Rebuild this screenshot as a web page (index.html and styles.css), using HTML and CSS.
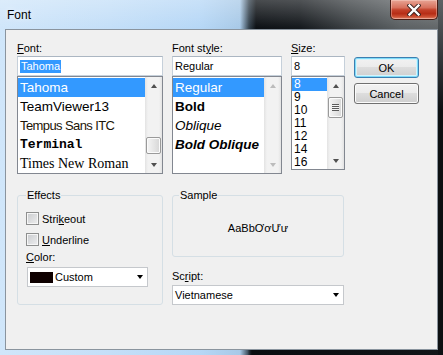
FILE: index.html
```html
<!DOCTYPE html>
<html lang="en">
<head>
    <meta charset="UTF-8">
    <meta name="viewport" content="width=device-width, initial-scale=1.0">
    <title>Font</title>
    <link rel="stylesheet" href="styles.css">
</head>
<body>
    <div class="window">
        <div class="titlebar">
            <span class="title">Font</span>
            <button class="close" aria-label="Close">
                <svg width="14" height="12" viewBox="0 0 14 12">
                    <path d="M2.5 1.5 L11.5 10.5 M11.5 1.5 L2.5 10.5" stroke="#3b2320" stroke-width="4.2" stroke-linecap="square" fill="none"/>
                    <path d="M2.5 1.5 L11.5 10.5 M11.5 1.5 L2.5 10.5" stroke="#ffffff" stroke-width="2.4" stroke-linecap="square" fill="none"/>
                </svg>
            </button>
        </div>

        <div class="dialog">
            <div class="top-row">
                <!-- Font family -->
                <div class="col col-font">
                    <label class="lbl"><u>F</u>ont:</label>
                    <div class="textbox"><span class="sel">Tahoma</span></div>
                    <div class="listbox list-font">
                        <ul class="items">
                            <li class="item active">Tahoma</li>
                            <li class="item">TeamViewer13</li>
                            <li class="item f-tempus">Tempus Sans ITC</li>
                            <li class="item f-terminal">Terminal</li>
                            <li class="item f-times">Times New Roman</li>
                        </ul>
                        <div class="scrollbar">
                            <div class="sb-btn up"></div>
                            <div class="sb-track"><div class="thumb thumb-font"></div></div>
                            <div class="sb-btn down"></div>
                        </div>
                    </div>
                </div>

                <!-- Font style -->
                <div class="col col-style">
                    <label class="lbl">Font st<u>y</u>le:</label>
                    <div class="textbox">Regular</div>
                    <div class="listbox list-style">
                        <ul class="items">
                            <li class="item active">Regular</li>
                            <li class="item s-bold">Bold</li>
                            <li class="item s-oblique">Oblique</li>
                            <li class="item s-bold s-oblique">Bold Oblique</li>
                        </ul>
                        <div class="scrollbar disabled">
                            <div class="sb-btn up"></div>
                            <div class="sb-track"></div>
                            <div class="sb-btn down"></div>
                        </div>
                    </div>
                </div>

                <!-- Size -->
                <div class="col col-size">
                    <label class="lbl"><u>S</u>ize:</label>
                    <div class="textbox">8</div>
                    <div class="listbox list-size">
                        <ul class="items">
                            <li class="item active">8</li>
                            <li class="item">9</li>
                            <li class="item">10</li>
                            <li class="item">11</li>
                            <li class="item">12</li>
                            <li class="item">14</li>
                            <li class="item">16</li>
                        </ul>
                        <div class="scrollbar">
                            <div class="sb-btn up"></div>
                            <div class="sb-track"><div class="thumb thumb-size"></div></div>
                            <div class="sb-btn down"></div>
                        </div>
                    </div>
                </div>

                <div class="buttons">
                    <button class="btn btn-default">OK</button>
                    <button class="btn">Cancel</button>
                </div>
            </div>

            <div class="bottom-row">
                <fieldset class="group group-effects">
                    <legend>Effects</legend>
                    <div class="check-row first">
                        <span class="checkbox"></span>
                        <span>Stri<u>k</u>eout</span>
                    </div>
                    <div class="check-row">
                        <span class="checkbox"></span>
                        <span><u>U</u>nderline</span>
                    </div>
                    <label class="lbl lbl-color"><u>C</u>olor:</label>
                    <div class="combo combo-color">
                        <span class="swatch"></span>
                        <span class="combo-text">Custom</span>
                        <span class="combo-arrow"></span>
                    </div>
                </fieldset>

                <div class="col-right">
                    <fieldset class="group group-sample">
                        <legend>Sample</legend>
                        <div class="sample-text">AaBbƠơƯư</div>
                    </fieldset>
                    <label class="lbl lbl-script">Sc<u>r</u>ipt:</label>
                    <div class="combo combo-script">
                        <span class="combo-text">Vietnamese</span>
                        <span class="combo-arrow"></span>
                    </div>
                </div>
            </div>
        </div>
    </div>
</body>
</html>
```

FILE: styles.css
```css
body {
    margin: 0;
    font-family: "Liberation Sans", Arial, sans-serif;
    font-size: 11px;
    color: #000;
    background: #000;
}

u {
    text-decoration: underline;
    text-underline-offset: 1px;
}

/* Aero glass frame */
.window {
    width: 443px;
    height: 355px;
    display: flex;
    flex-direction: column;
    background:
        linear-gradient(to bottom, #5d6265 0, #2a2e31 70px, #0d1012 110px) right top / 5px 100% no-repeat,
        linear-gradient(to right, transparent 248px, #0a0d10 252px, #121518 100%) left bottom / 100% 5px no-repeat,
        linear-gradient(to bottom, rgba(255, 255, 255, 0.25), rgba(255, 255, 255, 0) 28px),
        linear-gradient(to right, #d0e6fa 0, #c4dff8 110px, #b6d7f6 200px, #a8c9e7 240px, #33414d 249px, #0c1014 256px, #15191d 300px, #3c4144 350px, #5b6063 400px, #64686a 443px);
}

.titlebar {
    height: 29px;
    display: flex;
    justify-content: space-between;
    align-items: flex-start;
}

.title {
    font-size: 12px;
    line-height: 30px;
    padding-left: 7px;
    text-shadow: 0 0 6px rgba(255, 255, 255, 0.9);
}

.close {
    width: 48px;
    height: 20px;
    margin-right: 5px;
    padding: 0;
    display: flex;
    align-items: center;
    justify-content: center;
    border: 1px solid #4a1d16;
    border-top: none;
    border-radius: 0 0 5px 5px;
    background: linear-gradient(#e8a595 0, #d7715d 40%, #c3412a 52%, #b72d16 72%, #cf5538 90%, #e49480 100%);
    box-shadow: inset 0 0 0 1px rgba(255, 230, 220, 0.35);
}

/* Dialog client area */
.dialog {
    flex: 1;
    margin: 0 5px 5px;
    background: #f0f0f0;
    border: 1px solid #8a949e;
    padding: 12px 0 0 11px;
}

.top-row {
    display: flex;
    gap: 9px;
    align-items: flex-start;
}

.col-font { width: 146px; }
.col-style { width: 110px; }
.col-size { width: 54px; }

.lbl {
    display: block;
    line-height: 13px;
    margin-bottom: 1px;
}

.textbox {
    height: 20px;
    box-sizing: border-box;
    border: 1px solid #c6d0da;
    border-top-color: #abb6c2;
    background: #fff;
    padding: 0 2px;
    line-height: 18px;
    white-space: nowrap;
}

.sel {
    display: inline-block;
    line-height: 13px;
    background: #3399ff;
    color: #fff;
    padding: 0 1px;
    vertical-align: middle;
    margin-top: -2px;
}

/* List boxes */
.listbox {
    display: flex;
    box-sizing: border-box;
    border: 1px solid #828790;
    background: #fff;
}

.list-font, .list-style { height: 98px; }
.list-size { height: 94px; }

.items {
    flex: 1;
    list-style: none;
    margin: 0;
    padding: 1px 0 0;
    overflow: hidden;
}

.item {
    height: 19px;
    line-height: 19px;
    padding-left: 2px;
    font-size: 13.5px;
    white-space: nowrap;
}

.item.active {
    background: #3399ff;
    color: #fff;
}

.f-tempus {
    font-size: 13px;
    letter-spacing: -0.6px;
    color: #1c1408;
}

.f-terminal {
    font-family: "Liberation Mono", "DejaVu Sans Mono", monospace;
    font-weight: bold;
    font-size: 13px;
}

.f-times {
    font-family: "Liberation Serif", "Times New Roman", serif;
    font-size: 14px;
}

.s-bold { font-weight: bold; }
.s-oblique { font-style: italic; }

.list-size .item {
    height: 13px;
    line-height: 13px;
    font-size: 12px;
}

/* Scrollbars */
.scrollbar {
    width: 17px;
    display: flex;
    flex-direction: column;
    background: linear-gradient(to right, #e3e3e3 0, #f2f2f2 3px, #f2f2f2 14px, #e3e3e3 17px);
}

.sb-btn {
    height: 17px;
    display: flex;
    align-items: center;
    justify-content: center;
}

.sb-btn::before {
    content: "";
    width: 0;
    height: 0;
    border-left: 3.5px solid transparent;
    border-right: 3.5px solid transparent;
}

.sb-btn.up::before { border-bottom: 4px solid #505050; }
.sb-btn.down::before { border-top: 4px solid #505050; }

.disabled .sb-btn.up::before { border-bottom-color: #bcbcbc; }
.disabled .sb-btn.down::before { border-top-color: #bcbcbc; }

.sb-track { flex: 1; }

.thumb {
    margin: 0 1px;
    box-sizing: border-box;
    border: 1px solid #9a9a9a;
    border-radius: 2px;
    background: linear-gradient(to right, #f5f5f5, #e6e6e6 50%, #d6d6d6);
    box-shadow: inset 0 0 0 1px #fbfbfb;
    display: flex;
    align-items: center;
    justify-content: center;
}

.thumb-font {
    height: 17px;
    margin-top: 43px;
}

.thumb-size {
    height: 21px;
    margin-top: 3px;
}

.thumb-size::after {
    content: "";
    width: 7px;
    height: 7px;
    background: repeating-linear-gradient(to bottom, #5a5a5a 0, #5a5a5a 1px, #f4f4f4 1px, #f4f4f4 2px);
}

/* Buttons */
.buttons {
    width: 65px;
    margin-top: 15px;
    display: flex;
    flex-direction: column;
    gap: 5px;
}

.btn {
    height: 21px;
    box-sizing: border-box;
    padding: 0;
    border: 1px solid #707070;
    border-radius: 3px;
    background: linear-gradient(#f2f2f2 0, #ebebeb 50%, #dddddd 50%, #cfcfcf 100%);
    box-shadow: inset 0 0 0 1px #fbfbfb;
    font-family: "Liberation Sans", Arial, sans-serif;
    font-size: 11px;
    color: #000;
}

.btn-default {
    border-color: #3c7fb1;
    box-shadow: inset 0 0 0 1px #7fdcf9, inset 0 0 0 2px #d6f3fc;
}

/* Group boxes */
.bottom-row {
    display: flex;
    gap: 9px;
    align-items: flex-start;
    margin-top: 15px;
}

.group {
    margin: 0;
    padding: 0 8px;
    border: 1px solid #d5dfe5;
    border-radius: 3px;
    min-width: 0;
}

.group legend {
    padding: 0 1px;
    line-height: 13px;
}

.group-effects {
    width: 146px;
    box-sizing: border-box;
    padding-bottom: 17px;
}

.check-row {
    display: flex;
    align-items: center;
    gap: 3px;
    height: 13px;
    margin-top: 8px;
}

.check-row.first { margin-top: 10px; }

.checkbox {
    width: 13px;
    height: 13px;
    box-sizing: border-box;
    border: 1px solid #8e8f8f;
    background: linear-gradient(135deg, #c9cbce, #eeeeef);
    box-shadow: inset 0 0 0 1px #f6f6f6;
}

.lbl-color { margin-top: 5px; margin-bottom: 0; }

.combo {
    display: flex;
    align-items: center;
    height: 20px;
    box-sizing: border-box;
    border: 1px solid #c5c8cc;
    background: #fff;
    padding: 0 4px 0 2px;
}

.combo-color {
    width: 121px;
    margin: 3px 0 0 1px;
}

.swatch {
    width: 23px;
    height: 11px;
    background: #0e0000;
    margin-right: 2px;
}

.combo-text { flex: 1; }

.combo-arrow {
    width: 0;
    height: 0;
    border-left: 3.5px solid transparent;
    border-right: 3.5px solid transparent;
    border-top: 4px solid #000;
}

.col-right {
    width: 172px;
}

.group-sample {
    box-sizing: border-box;
    width: 172px;
    padding-bottom: 21px;
}

.group-sample legend { margin-left: -2px; }

.sample-text {
    margin-top: 20px;
    line-height: 13px;
    text-align: center;
}

.lbl-script { margin-top: 13px; margin-bottom: 2px; }

.combo-script { width: 172px; }
```
